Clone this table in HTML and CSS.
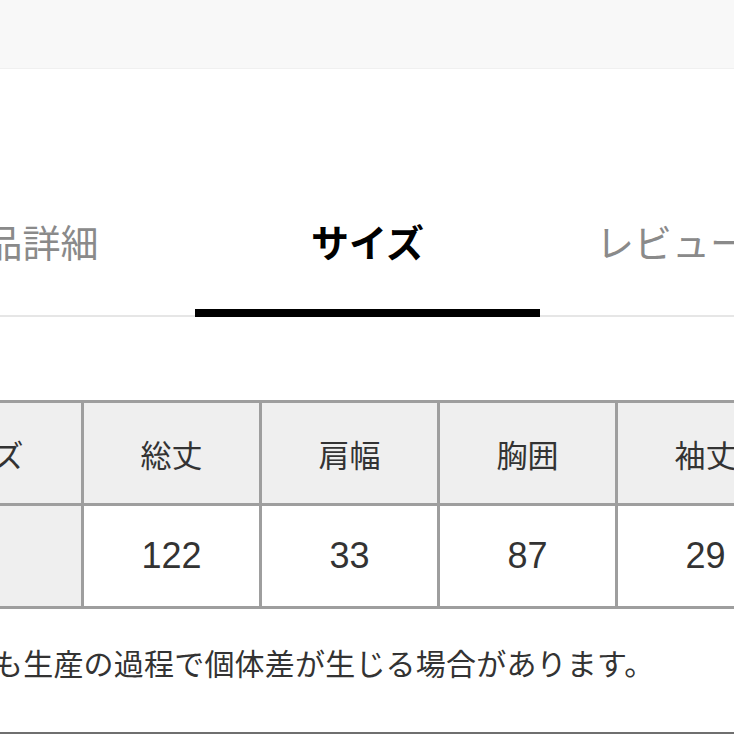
FILE: index.html
```html
<!DOCTYPE html>
<html lang="ja">
<head>
<meta charset="utf-8">
<title>サイズ</title>
<link rel="stylesheet" href="styles.css">
</head>
<body>
<div class="topbar"></div>
<nav class="tabs">
  <div class="tab">商品詳細</div>
  <div class="tab active">サイズ</div>
  <div class="tab tab-last">レビュー</div>
</nav>
<div class="size-table">
  <div class="cell head first">サイズ</div>
  <div class="cell head">総丈</div>
  <div class="cell head">肩幅</div>
  <div class="cell head">胸囲</div>
  <div class="cell head">袖丈</div>
  <div class="cell label"></div>
  <div class="cell num">122</div>
  <div class="cell num">33</div>
  <div class="cell num">87</div>
  <div class="cell num">29</div>
</div>
<p class="note">も生産の過程で個体差が生じる場合があります。</p>
<div class="divider"></div>
</body>
</html>
```

FILE: styles.css
```css
html, body {
  margin: 0;
  padding: 0;
  overflow: hidden;
  background: #ffffff;
}

body {
  font-family: "Noto Sans CJK JP", "Noto Sans", sans-serif;
  color: #333333;
  width: 734px;
  height: 734px;
}

.topbar {
  height: 68px;
  background: #f8f8f8;
  border-bottom: 1px solid #f0f0f0;
}

.tabs {
  display: flex;
  margin-top: 106px;
  margin-left: -150px;
  width: max-content;
  min-width: 1035px;
  border-bottom: 2px solid #e6e6e6;
}

.tab {
  width: 345px;
  height: 130px;
  padding-bottom: 4px;
  display: flex;
  align-items: center;
  justify-content: center;
  font-size: 38px;
  color: #8a8a8a;
  border-bottom: 8px solid transparent;
  margin-bottom: -2px;
  box-sizing: content-box;
  white-space: nowrap;
}

.tab.active {
  color: #000000;
  font-weight: 700;
  border-bottom-color: #000000;
}

.tab-last {
  justify-content: flex-start;
  padding-left: 56px;
  width: 289px;
}

.size-table {
  display: grid;
  grid-template-columns: repeat(5, 175px);
  grid-auto-rows: 100px;
  gap: 3px;
  padding: 3px 0;
  background: #9e9e9e;
  margin-top: 83px;
  margin-left: -94px;
  width: max-content;
}

.cell {
  display: flex;
  align-items: center;
  justify-content: center;
  background: #ffffff;
}

.head {
  background: #efefef;
  font-size: 31px;
  color: #333333;
}

.head.first {
  padding-right: 32px;
}

.label {
  background: #efefef;
}

.num {
  font-family: "Liberation Sans", Arial, sans-serif;
  font-size: 36px;
  color: #333333;
}

.note {
  margin: 33px 0 0 -7px;
  font-size: 30px;
  line-height: 40px;
  letter-spacing: 0.2px;
  color: #333333;
  white-space: nowrap;
}

.divider {
  margin-top: 50px;
  height: 2px;
  background: #6f6f6f;
}
```
